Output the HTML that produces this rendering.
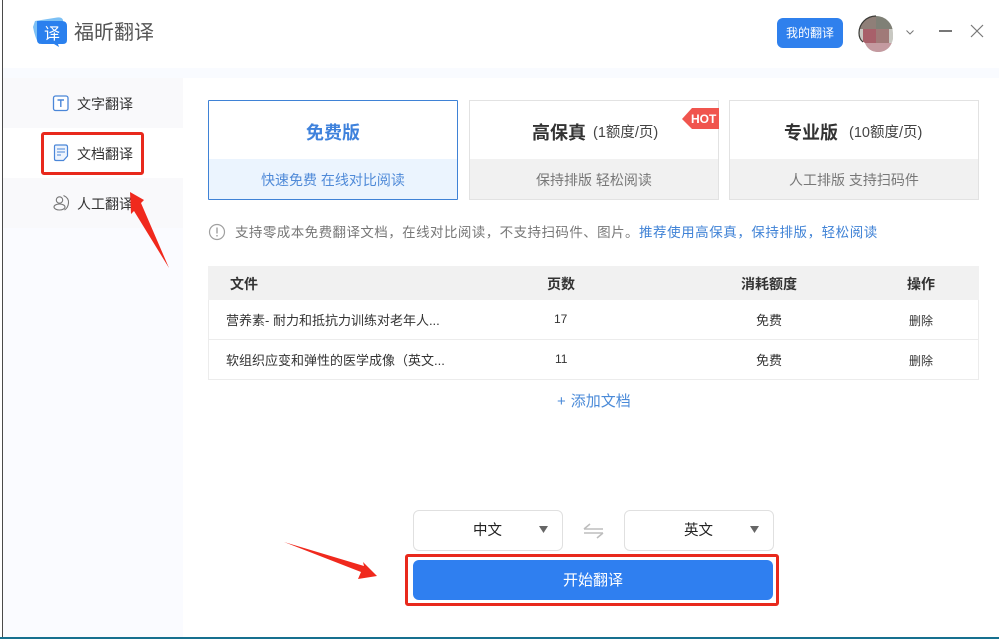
<!DOCTYPE html>
<html lang="zh">
<head>
<meta charset="utf-8">
<style>
html,body{margin:0;padding:0;width:999px;height:639px;overflow:hidden;background:#fff;}
body{position:relative;font-family:"Liberation Sans","Noto Sans CJK SC",sans-serif;color:#333;}
.a{position:absolute;white-space:nowrap;}
.t{position:absolute;white-space:nowrap;line-height:20px;height:20px;}
.c{text-align:center;}
</style>
</head>
<body>
<!-- backgrounds -->
<div class="a" style="left:3px;top:68px;width:996px;height:10px;background:#f9fbff"></div>
<div class="a" style="left:3px;top:78px;width:180px;height:559px;background:#fafbff"></div>
<div class="a" style="left:3px;top:78px;width:180px;height:50px;background:#f9f9fb"></div>
<div class="a" style="left:3px;top:128px;width:180px;height:50px;background:#fff"></div>
<div class="a" style="left:3px;top:178px;width:180px;height:50px;background:#f9f9fb"></div>
<div class="a" style="left:2px;top:0;width:1px;height:637px;background:#4a4a4a"></div>
<div class="a" style="left:0;top:637px;width:999px;height:2px;background:#16708f"></div>

<!-- logo -->
<svg class="a" style="left:29px;top:13px" width="44" height="36" viewBox="0 0 44 36">
<path d="M6 8 L28 4.5 Q33 4 34 7 L36 26 L10 31 Q6 25 4 14Z" fill="#7cc0f5"/>
<path d="M8 8 H33 Q38 8 38 13 V27 Q38 31 34 31 H29 L30 34 L25 31 H13 Q8 31 8 27Z" fill="#2a80ee"/>
<text x="23" y="26" font-size="16" fill="#fff" text-anchor="middle" font-family="Liberation Sans,Noto Sans CJK SC,sans-serif">译</text>
</svg>
<div class="t" style="left:74px;top:20px;height:26px;line-height:26px;font-size:20px;color:#555">福昕翻译</div>

<!-- top right -->
<div class="a c" style="left:777px;top:18px;width:66px;height:30px;background:#2f80ed;border-radius:6px;color:#fff;font-size:12px;line-height:30px">我的翻译</div>
<svg class="a" style="left:858px;top:15px" width="36" height="38" viewBox="0 0 36 38">
<defs><clipPath id="av"><path d="M18 1A17 17 0 0 1 35 18V24Q32 37 19 37Q10 36 7 28Q1 24 1 18A17 17 0 0 1 18 1Z"/></clipPath></defs>
<g clip-path="url(#av)">
<rect width="36" height="38" fill="#c8c8c2"/>
<rect x="0" y="0" width="18" height="14" fill="#8f7f78"/>
<rect x="18" y="0" width="18" height="14" fill="#7f8076"/>
<rect x="5" y="14" width="13" height="14" fill="#a8606a"/>
<rect x="18" y="14" width="13" height="14" fill="#a07a78"/>
<rect x="5" y="28" width="30" height="10" fill="#c49aa0"/>
</g>
<path d="M18 1A17 17 0 0 0 1 18Q1 24 5 27" fill="none" stroke="#3a3a36" stroke-width="1.2"/>
</svg>
<svg class="a" style="left:904px;top:29px" width="12" height="8" viewBox="0 0 12 8"><path d="M2.5 1.5L6 5L9.5 1.5" fill="none" stroke="#777" stroke-width="1"/></svg>
<div class="a" style="left:939px;top:30px;width:13px;height:2px;background:#777"></div>
<svg class="a" style="left:970px;top:24px" width="14" height="14" viewBox="0 0 14 14"><path d="M1 1L13 13M13 1L1 13" stroke="#777" stroke-width="1.2" fill="none"/></svg>

<!-- sidebar -->
<svg class="a" style="left:52px;top:95px" width="18" height="17" viewBox="0 0 18 17">
<rect x="1.5" y="1" width="14.5" height="14.5" rx="2" fill="#fff" stroke="#4a86d8" stroke-width="1.3"/>
<path d="M5.5 5H12M8.8 5V12" stroke="#4a86d8" stroke-width="1.4" fill="none"/>
</svg>
<div class="t" style="left:77px;top:94px;font-size:14px;color:#333">文字翻译</div>

<svg class="a" style="left:53px;top:144px" width="16" height="18" viewBox="0 0 16 18">
<path d="M3 1H12.5Q14.5 1 14.5 3V12L10.5 16.5H3Q1.5 16.5 1.5 15V2.5Q1.5 1 3 1Z" fill="#eef4fd" stroke="#4a86d8" stroke-width="1.2"/>
<path d="M4 5H12M4 8H12M4 11H8" stroke="#4a86d8" stroke-width="1.1" fill="none"/>
</svg>
<div class="t" style="left:77px;top:144px;font-size:14px;color:#333">文档翻译</div>

<svg class="a" style="left:52px;top:194px" width="18" height="18" viewBox="0 0 18 18">
<circle cx="7.5" cy="6" r="3.2" fill="none" stroke="#777" stroke-width="1.1"/>
<ellipse cx="7.5" cy="13" rx="5.5" ry="3" fill="none" stroke="#777" stroke-width="1.1"/>
<path d="M11.5 1.5Q17 4 16.5 9Q16 14 12.5 16" fill="none" stroke="#777" stroke-width="1.1"/>
</svg>
<div class="t" style="left:77px;top:194px;font-size:14px;color:#333">人工翻译</div>

<!-- red boxes -->
<div class="a" style="left:41px;top:132px;width:103px;height:43px;box-sizing:border-box;border:3px solid #e8291c;border-radius:3px"></div>
<svg class="a" style="left:120px;top:180px" width="60" height="100" viewBox="0 0 60 100">
<path d="M10 12L24 20L21 23L49 88L14 31L11 34Z" fill="#f0291d"/>
</svg>

<!-- cards -->
<div class="a" style="left:208px;top:100px;width:250px;height:100px;box-sizing:border-box;border:1px solid #3f82d6;background:#fff;border-radius:1px">
  <div class="a" style="left:0;top:58px;width:248px;height:40px;background:#ebf4fe"></div>
</div>
<div class="t c" style="left:208px;top:123px;width:250px;font-size:18px;font-weight:bold;color:#3f82dc">免费版</div>
<div class="t c" style="left:208px;top:170px;width:250px;font-size:14px;line-height:21px;color:#4f8ad8">快速免费 在线对比阅读</div>

<div class="a" style="left:469px;top:100px;width:250px;height:100px;box-sizing:border-box;border:1px solid #e2e2e2;background:#fff">
  <div class="a" style="left:0;top:58px;width:248px;height:40px;background:#f1f1f1"></div>
</div>
<div class="t" style="left:532px;top:123px;font-size:18px;font-weight:bold;color:#333">高保真</div>
<div class="t" style="left:593px;top:123px;font-size:14.5px;color:#444">(1额度/页)</div>
<div class="t c" style="left:469px;top:170px;width:250px;font-size:14px;line-height:21px;color:#777">保持排版 轻松阅读</div>
<svg class="a" style="left:682px;top:108px" width="37" height="22" viewBox="0 0 37 22"><path d="M0 11L10 0H37V21H10Z" fill="#f0554e"/></svg>
<div class="t" style="left:691px;top:109px;font-size:12px;font-weight:bold;color:#fff">HOT</div>

<div class="a" style="left:729px;top:100px;width:250px;height:100px;box-sizing:border-box;border:1px solid #e2e2e2;background:#fff">
  <div class="a" style="left:0;top:58px;width:248px;height:40px;background:#f1f1f1"></div>
</div>
<div class="t" style="left:784px;top:123px;font-size:18px;font-weight:bold;color:#333">专业版</div>
<div class="t" style="left:849px;top:123px;font-size:14.5px;color:#444">(10额度/页)</div>
<div class="t c" style="left:729px;top:170px;width:250px;font-size:14px;line-height:21px;color:#777">人工排版 支持扫码件</div>

<!-- notice -->
<svg class="a" style="left:208px;top:223px" width="18" height="18" viewBox="0 0 18 18">
<circle cx="9" cy="9" r="7.5" fill="none" stroke="#a0a0a0" stroke-width="1.2"/>
<path d="M9 4.5V10.5M9 12V13.5" stroke="#a0a0a0" stroke-width="1.4" fill="none"/>
</svg>
<div class="t" style="left:235px;top:223px;font-size:13.5px;color:#777;letter-spacing:.43px">支持零成本免费翻译文档，在线对比阅读，不支持扫码件、图片。<span style="color:#3f82d6;letter-spacing:.55px">推荐使用高保真，保持排版，轻松阅读</span></div>

<!-- table -->
<div class="a" style="left:208px;top:266px;width:771px;height:34px;background:#f1f1f1"></div>
<div class="a" style="left:208px;top:300px;width:771px;height:80px;box-sizing:border-box;border:1px solid #ececec;border-top:none"></div>
<div class="a" style="left:208px;top:339px;width:771px;height:1px;background:#ececec"></div>
<div class="t" style="left:230px;top:274px;font-size:14px;font-weight:bold;color:#333">文件</div>
<div class="t" style="left:547px;top:274px;font-size:14px;font-weight:bold;color:#333">页数</div>
<div class="t" style="left:741px;top:274px;font-size:14px;font-weight:bold;color:#333">消耗额度</div>
<div class="t" style="left:907px;top:274px;font-size:14px;font-weight:bold;color:#333">操作</div>

<div class="t" style="left:226px;top:311px;font-size:13px;color:#333">营养素- 耐力和抵抗力训练对老年人...</div>
<div class="t" style="left:554px;top:309px;font-size:12px;color:#333">17</div>
<div class="t" style="left:756px;top:311px;font-size:13px;color:#333">免费</div>
<div class="t" style="left:909px;top:311px;font-size:12px;color:#333">删除</div>

<div class="t" style="left:226px;top:351px;font-size:13px;color:#333">软组织应变和弹性的医学成像（英文...</div>
<div class="t" style="left:555px;top:349px;font-size:12px;color:#333">11</div>
<div class="t" style="left:756px;top:351px;font-size:13px;color:#333">免费</div>
<div class="t" style="left:909px;top:351px;font-size:12px;color:#333">删除</div>

<div class="t" style="left:557px;top:391px;font-size:15px;line-height:21px;color:#4a8ad8">+<span style="margin-left:5px">添加文档</span></div>

<!-- language selects -->
<div class="a" style="left:413px;top:510px;width:150px;height:41px;box-sizing:border-box;border:1px solid #e0e0e0;border-radius:6px;background:#fff"></div>
<div class="t" style="left:473px;top:521px;font-size:14.5px;color:#222">中文</div>
<svg class="a" style="left:538px;top:525px" width="11" height="9" viewBox="0 0 11 9"><path d="M1 1H10L5.5 8Z" fill="#666"/></svg>

<svg class="a" style="left:582px;top:522px" width="23" height="17" viewBox="0 0 23 17">
<path d="M2 7H21M2 7L8 2M2 11H21M21 11L15 16" fill="none" stroke="#bdbdbd" stroke-width="1.5"/>
</svg>

<div class="a" style="left:624px;top:510px;width:150px;height:41px;box-sizing:border-box;border:1px solid #e0e0e0;border-radius:6px;background:#fff"></div>
<div class="t" style="left:684px;top:521px;font-size:14.5px;color:#222">英文</div>
<svg class="a" style="left:749px;top:525px" width="11" height="9" viewBox="0 0 11 9"><path d="M1 1H10L5.5 8Z" fill="#666"/></svg>

<!-- start button -->
<div class="a" style="left:405px;top:554px;width:374px;height:52px;box-sizing:border-box;border:3px solid #e8291c;border-radius:3px;background:#fff"></div>
<div class="a c" style="left:413px;top:560px;width:360px;height:40px;border-radius:6px;background:#2f7ff0;color:#fff;font-size:15px;line-height:42px">开始翻译</div>

<svg class="a" style="left:280px;top:538px" width="100" height="44" viewBox="0 0 100 44">
<path d="M4 4L84 28L83 24L97 38L78 41L81 34Z" fill="#f0291d"/>
</svg>
</body>
</html>
